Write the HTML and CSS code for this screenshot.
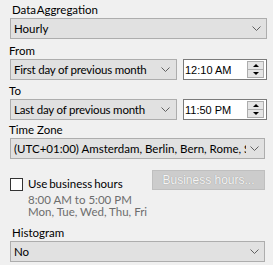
FILE: index.html
```html
<!DOCTYPE html>
<html lang="en">
<head>
    <meta charset="UTF-8">
    <title>Report settings</title>
    <link rel="stylesheet" href="styles.css">
</head>
<body>

    <div class="panel">
        <div class="field-label indent">Data Aggregation</div>
        <div class="select">
            <span>Hourly</span>
            <svg class="chevron" width="9" height="5" viewBox="0 0 9 5"><polyline points="0.5,0.5 4.5,4.5 8.5,0.5" fill="none" stroke="#606060"/></svg>
        </div>

        <div class="field-label label-from">From</div>
        <div class="date-row">
            <div class="select short">
                <span>First day of previous month</span>
                <svg class="chevron" width="9" height="5" viewBox="0 0 9 5"><polyline points="0.5,0.5 4.5,4.5 8.5,0.5" fill="none" stroke="#606060"/></svg>
            </div>
            <div class="time-box">
                <span>12:10 AM</span>
                <div class="spinner">
                    <div class="spin-btn"><span class="arrow-up"></span></div>
                    <div class="spin-btn"><span class="arrow-down"></span></div>
                </div>
            </div>
        </div>

        <div class="field-label label-to">To</div>
        <div class="date-row">
            <div class="select short">
                <span>Last day of previous month</span>
                <svg class="chevron" width="9" height="5" viewBox="0 0 9 5"><polyline points="0.5,0.5 4.5,4.5 8.5,0.5" fill="none" stroke="#606060"/></svg>
            </div>
            <div class="time-box">
                <span>11:50 PM</span>
                <div class="spinner">
                    <div class="spin-btn"><span class="arrow-up"></span></div>
                    <div class="spin-btn"><span class="arrow-down"></span></div>
                </div>
            </div>
        </div>

        <div class="field-label label-tz">Time Zone</div>
        <div class="select narrow">
            <span>(UTC+01:00) Amsterdam, Berlin, Bern, Rome, Stockholm, Vienna</span>
            <svg class="chevron" width="9" height="5" viewBox="0 0 9 5"><polyline points="0.5,0.5 4.5,4.5 8.5,0.5" fill="none" stroke="#606060"/></svg>
        </div>

        <div class="business-row">
            <label class="check-label">
                <span class="checkbox"></span>
                <span>Use business hours</span>
            </label>
            <button class="business-button" disabled>Business hours...</button>
        </div>

        <div class="hours-info">
            <div>8:00 AM to 5:00 PM</div>
            <div>Mon, Tue, Wed, Thu, Fri</div>
        </div>

        <div class="field-label indent label-histogram">Histogram</div>
        <div class="select narrow">
            <span>No</span>
            <svg class="chevron" width="9" height="5" viewBox="0 0 9 5"><polyline points="0.5,0.5 4.5,4.5 8.5,0.5" fill="none" stroke="#606060"/></svg>
        </div>
    </div>

</body>
</html>
```

FILE: styles.css
```css
body {
    margin: 0;
    background-color: #f0f0f0;
    font-family: "Lato", "Noto Sans", sans-serif;
    font-size: 11.5px;
    color: #000;
}

.panel {
    width: 273px;
    box-sizing: border-box;
    padding: 2px 6px 0 10px;
}

.field-label {
    height: 16px;
    line-height: 16px;
    margin-left: -1px;
    white-space: nowrap;
}

.field-label.indent {
    margin-left: 2px;
    word-spacing: -2px;
}

.label-from {
    margin-top: 4px;
}

.label-to {
    margin-top: 3px;
}

.label-tz {
    margin-top: 2px;
}

.label-histogram {
    margin-top: 7px;
}

.select {
    height: 21px;
    box-sizing: border-box;
    border: 1px solid #adadad;
    background-color: #e1e1e1;
    display: flex;
    align-items: center;
    padding: 0 5px 0 3px;
    white-space: nowrap;
    overflow: hidden;
}

.select span {
    flex: 1;
    overflow: hidden;
}

.chevron {
    flex-shrink: 0;
    margin-left: 4px;
}

.select.short {
    width: 167px;
    padding-right: 6px;
}

.select.short span {
    letter-spacing: -0.2px;
}

.select.narrow {
    margin-right: 2px;
}

.date-row {
    display: flex;
    gap: 6px;
}

.time-box {
    flex: 1;
    height: 21px;
    box-sizing: border-box;
    border: 1px solid #7a7a7a;
    background-color: #fff;
    display: flex;
    align-items: center;
    justify-content: space-between;
    padding: 0 2px 0 1px;
    font-family: "Liberation Sans", Arial, sans-serif;
    font-size: 11px;
}

.spinner {
    display: flex;
    flex-direction: column;
    width: 17px;
    height: 17px;
}

.spin-btn {
    flex: 1;
    border: 1px solid #adadad;
    background-color: #e5e5e5;
    display: flex;
    align-items: center;
    justify-content: center;
}

.spin-btn + .spin-btn {
    border-top: none;
}

.arrow-up {
    width: 0;
    height: 0;
    border-left: 3px solid transparent;
    border-right: 3px solid transparent;
    border-bottom: 3px solid #000;
}

.arrow-down {
    width: 0;
    height: 0;
    border-left: 3px solid transparent;
    border-right: 3px solid transparent;
    border-top: 3px solid #000;
}

.business-row {
    margin-top: 11px;
    height: 20px;
    display: flex;
    justify-content: space-between;
    align-items: flex-start;
}

.check-label {
    margin-top: 6px;
    display: flex;
    align-items: center;
    gap: 5px;
    line-height: 16px;
    word-spacing: -1px;
}

.checkbox {
    width: 13px;
    height: 13px;
    box-sizing: border-box;
    border: 1px solid #333;
    background-color: #fff;
}

.business-button {
    width: 113px;
    height: 20px;
    margin-right: 2px;
    border: 1px solid #bfbfbf;
    background-color: #cccccc;
    font-family: "Liberation Sans", Arial, sans-serif;
    font-size: 12px;
    color: #f6f6f6;
    text-shadow: 0 0 1px #8a8a8a;
    padding: 0;
}

.hours-info {
    margin-top: 4px;
    padding-left: 18px;
    line-height: 12px;
    color: #6d6d6d;
}
```
